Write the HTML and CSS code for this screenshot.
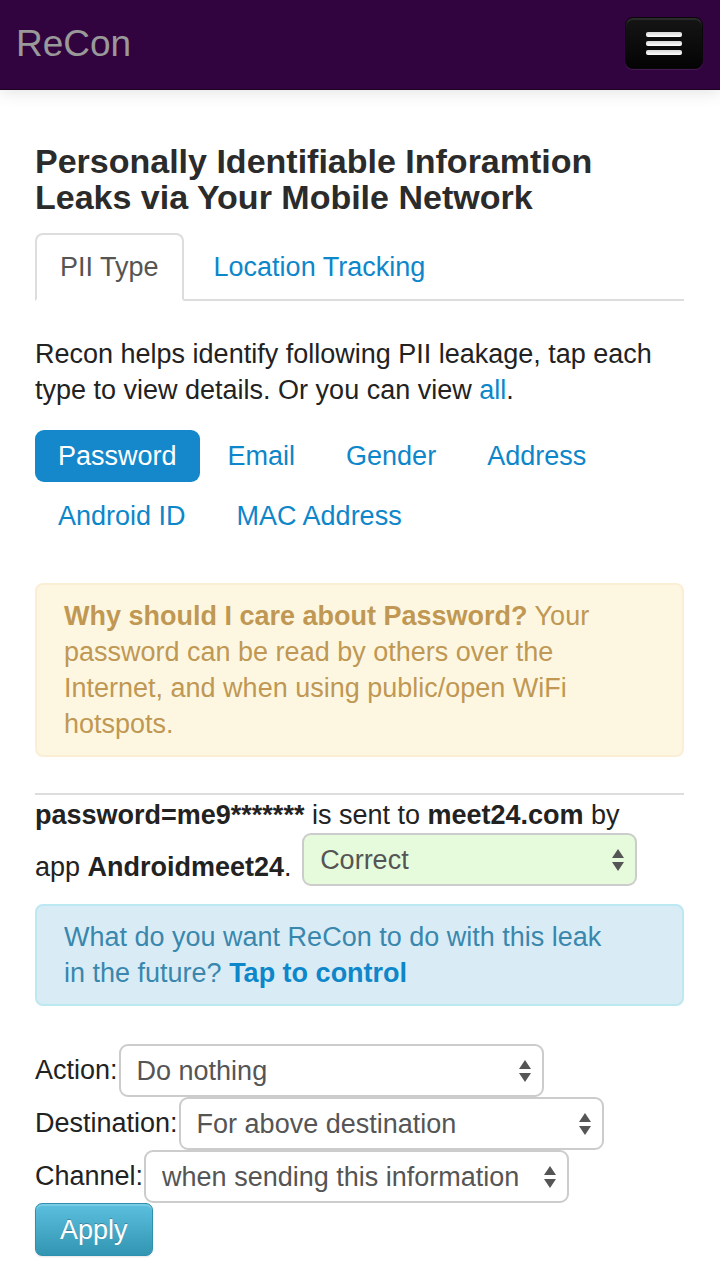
FILE: index.html
```html
<!DOCTYPE html>
<html lang="en">
<head>
<meta charset="utf-8">
<meta name="viewport" content="width=device-width, initial-scale=1">
<title>ReCon</title>
<link rel="stylesheet" href="styles.css">
</head>
<body>
<header class="navbar">
  <a class="brand" href="#">ReCon</a>
  <button class="menu-button" type="button" aria-label="Toggle navigation">
    <span class="bar"></span>
    <span class="bar"></span>
    <span class="bar"></span>
  </button>
</header>
<main class="content">
  <h1 class="title">Personally Identifiable Inforamtion Leaks via Your Mobile Network</h1>
  <nav class="tabs">
    <a class="tab tab-active" href="#pii">PII Type</a>
    <a class="tab" href="#location">Location Tracking</a>
  </nav>
  <p class="intro">Recon helps identify following PII leakage, tap each type to view details. Or you can view <a class="link" href="#all">all</a>.</p>
  <nav class="pills">
    <a class="pill pill-active" href="#password">Password</a>
    <a class="pill" href="#email">Email</a>
    <a class="pill" href="#gender">Gender</a>
    <a class="pill" href="#address">Address</a>
    <a class="pill" href="#android">Android ID</a>
    <a class="pill" href="#mac">MAC Address</a>
  </nav>
  <p class="alert alert-warning"><strong>Why should I care about Password?</strong> Your password can be read by others over the Internet, and when using public/open WiFi hotspots.</p>
  <section class="leak">
    <p class="leak-text"><strong>password=me9*******</strong> is sent to <strong>meet24.com</strong> by app <strong>Androidmeet24</strong>.
      <span class="picker picker-feedback">
        <select class="select select-correct" aria-label="Is this leak correct?"><option>Correct</option><option>Incorrect</option></select>
        <svg class="arrows" viewBox="0 0 12 22" aria-hidden="true"><path d="M6 0l6 9H0zM6 22l6-9H0z"/></svg>
      </span>
    </p>
    <p class="alert alert-info">What do you want ReCon to do with this leak in the future? <a class="link link-strong" href="#control">Tap to control</a></p>
  </section>
  <form class="controls">
    <div class="field">
      <label class="label" for="action">Action:</label>
      <span class="picker">
        <select class="select" id="action"><option>Do nothing</option></select>
        <svg class="arrows" viewBox="0 0 12 22" aria-hidden="true"><path d="M6 0l6 9H0zM6 22l6-9H0z"/></svg>
      </span>
    </div>
    <div class="field">
      <label class="label" for="destination">Destination:</label>
      <span class="picker">
        <select class="select" id="destination"><option>For above destination</option></select>
        <svg class="arrows" viewBox="0 0 12 22" aria-hidden="true"><path d="M6 0l6 9H0zM6 22l6-9H0z"/></svg>
      </span>
    </div>
    <div class="field">
      <label class="label" for="channel">Channel:</label>
      <span class="picker">
        <select class="select" id="channel"><option>when sending this information</option></select>
        <svg class="arrows" viewBox="0 0 12 22" aria-hidden="true"><path d="M6 0l6 9H0zM6 22l6-9H0z"/></svg>
      </span>
    </div>
    <button class="apply" type="button">Apply</button>
  </form>
</main>
</body>
</html>
```
FILE: styles.css
```css
* {
  box-sizing: border-box;
}

body {
  margin: 0;
  background: #fff;
  color: #222;
  font: 27px/36px "Liberation Sans", Arial, sans-serif;
}

a {
  text-decoration: none;
}

p {
  margin: 0;
}

.navbar {
  display: flex;
  align-items: center;
  justify-content: space-between;
  height: 90px;
  padding: 0 17px 4px 16px;
  background: #32043f;
  border-bottom: 1px solid #1b0322;
  box-shadow: 0 2px 16px rgba(0, 0, 0, 0.12);
}

.brand {
  padding-top: 2px;
  color: #999;
  font-size: 37px;
  line-height: 40px;
}

.menu-button {
  display: flex;
  flex-direction: column;
  align-items: center;
  justify-content: center;
  gap: 4px;
  width: 78px;
  height: 52px;
  padding: 2px 0 0;
  border: 1px solid #080808;
  border-radius: 8px;
  background: linear-gradient(#151515, #040404);
  box-shadow: inset 0 2px 1px rgba(255, 255, 255, 0.1), 0 1px 1px rgba(255, 255, 255, 0.1);
}

.bar {
  width: 36px;
  height: 5px;
  border-radius: 2px;
  background: linear-gradient(#d8d8d8, #fff);
}

.content {
  padding: 53px 36px 22px 35px;
}

.title {
  margin: 0 0 18px;
  color: #2b2b2b;
  font-size: 34px;
  line-height: 36px;
}

.tabs {
  display: flex;
  gap: 5px;
  margin-bottom: 35px;
  border-bottom: 2px solid #ddd;
}

.tab {
  padding: 14px 23px;
  margin-bottom: -2px;
  border: 2px solid transparent;
  border-radius: 8px 8px 0 0;
  color: #0d86ca;
}

.tab-active {
  border-color: #ddd;
  border-bottom-color: #fff;
  color: #555;
}

.intro {
  margin-bottom: 22px;
}

.link {
  color: #0d86ca;
}

.link-strong {
  font-weight: bold;
}

.pills {
  display: flex;
  flex-wrap: wrap;
  gap: 8px 5px;
  margin-bottom: 41px;
}

.pill {
  padding: 8px 23px;
  border-radius: 9px;
  color: #0d86ca;
}

.pill-active {
  background: #1488ca;
  color: #fff;
}

.alert {
  padding: 13px 64px 13px 27px;
  border: 2px solid;
  border-radius: 8px;
}

.alert-warning {
  margin-bottom: 36px;
  background: #fdf7e2;
  border-color: #fbeed5;
  color: #c09853;
}

.alert-info {
  background: #d9ecf6;
  border-color: #bce8f1;
  color: #3a87ad;
}

.leak {
  margin-bottom: 38px;
  border-top: 2px solid #ddd;
}

.leak-text {
  padding: 2px 8px 0 0;
}

.picker {
  display: inline-block;
  position: relative;
  width: 425px;
  max-width: 100%;
}

.picker-feedback {
  width: 335px;
  margin: 0 0 18px 3px;
  vertical-align: middle;
}

.leak-text {
  padding-right: 20px;
}

.select {
  display: block;
  width: 100%;
  height: 53px;
  padding: 0 40px 0 16px;
  border: 2px solid #ccc;
  border-radius: 9px;
  appearance: none;
  background: #fff;
  color: #555;
  font: inherit;
}

.select-correct {
  background: #e6fbdc;
}

.arrows {
  position: absolute;
  top: 16px;
  right: 13px;
  width: 12px;
  height: 22px;
  fill: #555;
  pointer-events: none;
}

.controls {
  display: flex;
  flex-direction: column;
  align-items: flex-start;
}

.field {
  display: flex;
  align-items: center;
  gap: 1px;
  max-width: 100%;
}

.label {
  flex: none;
  padding-bottom: 2px;
}

.apply {
  height: 53px;
  padding: 0 24px;
  border: 1px solid #2f8fae;
  border-radius: 7px;
  background: linear-gradient(#5bc0de, #3295b2);
  box-shadow: inset 0 2px 1px rgba(255, 255, 255, 0.2), 0 1px 2px rgba(0, 0, 0, 0.1);
  color: #fff;
  font: inherit;
  text-shadow: 0 -1px 0 rgba(0, 0, 0, 0.25);
}
```
